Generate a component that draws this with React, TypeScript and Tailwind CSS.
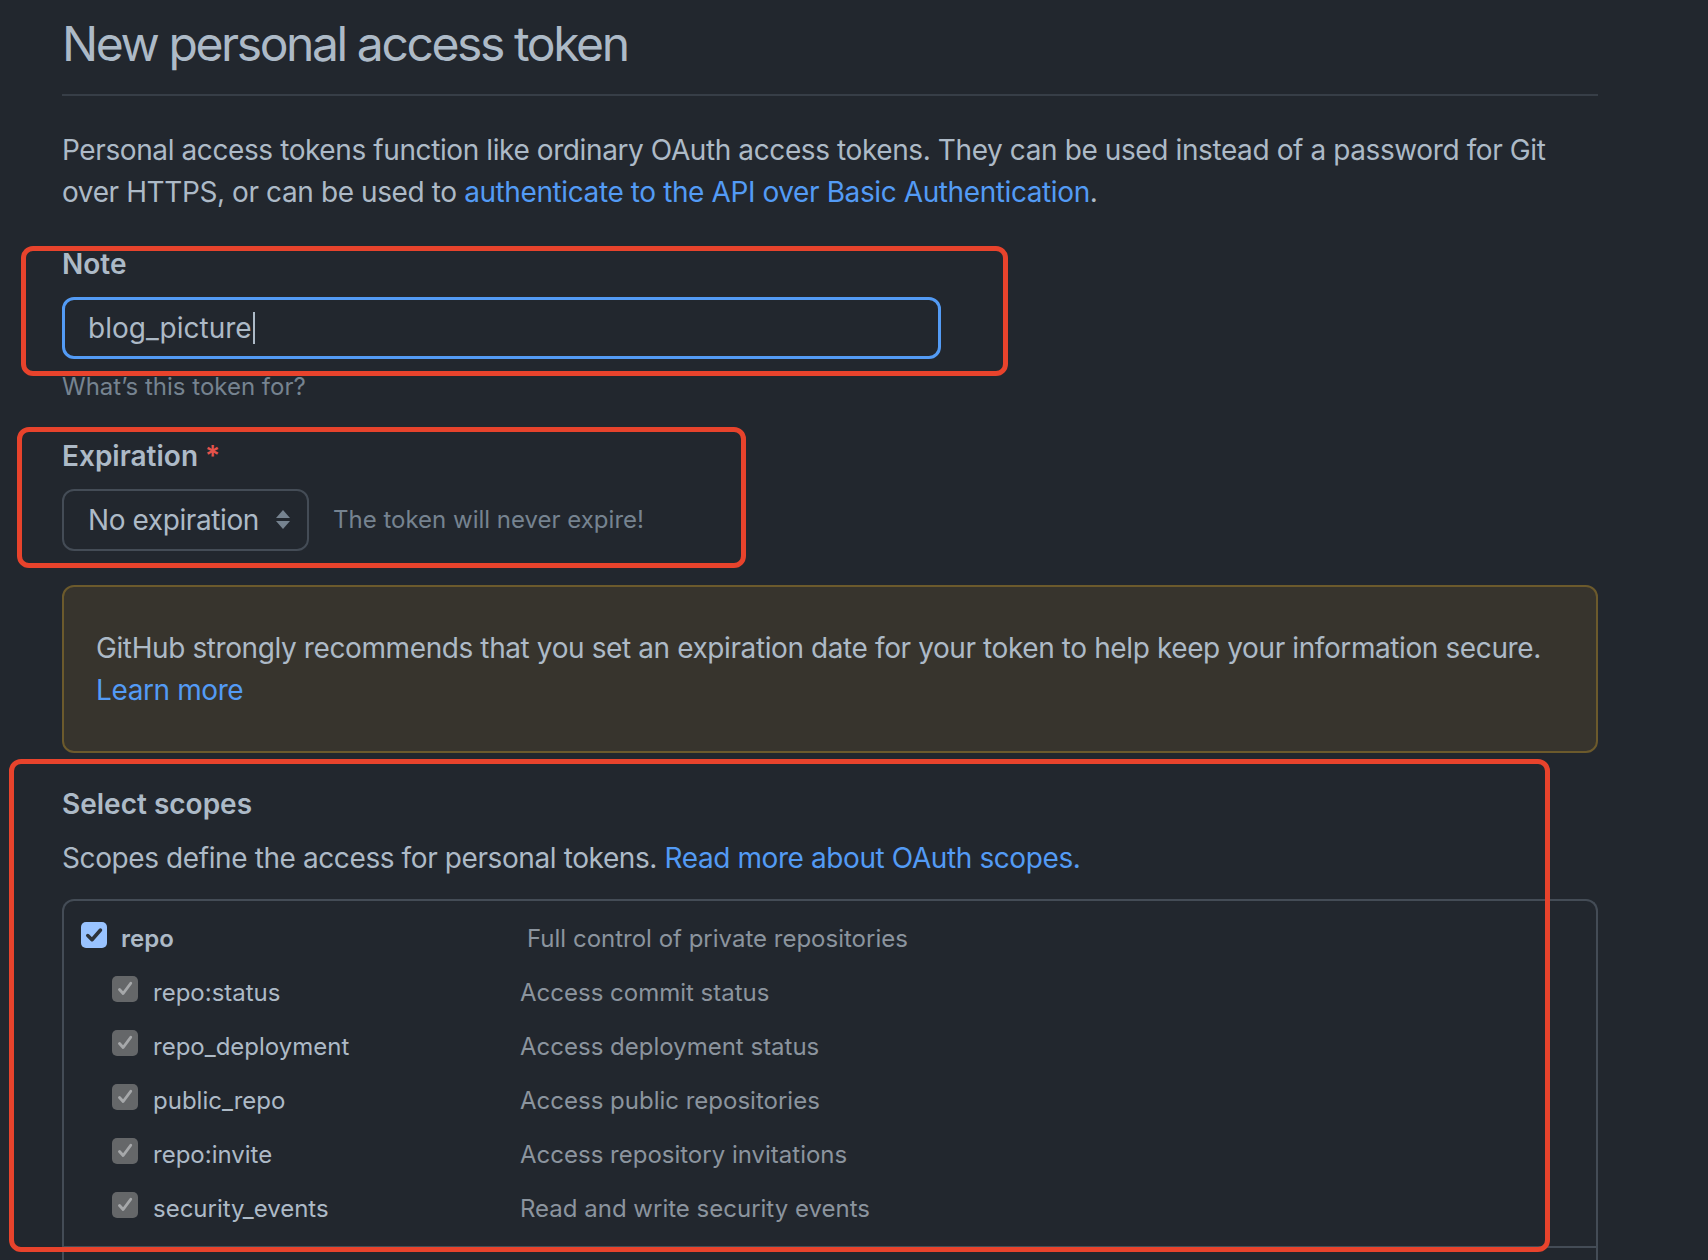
import React from "react";

const FONT = { fontFamily: 'Inter, "Liberation Sans", Arial, sans-serif' };

function BlueCheck() {
  return (
    <div className="flex h-[26px] w-[26px] shrink-0 items-center justify-center rounded-[5px] bg-[#99c3ff]">
      <svg width="20" height="20" viewBox="0 0 16 16">
        <path d="M3 8.4 L6.4 11.8 L13.2 4" fill="none" stroke="#2d333b" strokeWidth="2.8" strokeLinecap="round" strokeLinejoin="round" />
      </svg>
    </div>
  );
}

function GrayCheck() {
  return (
    <div className="flex h-[26px] w-[26px] shrink-0 items-center justify-center rounded-[5px] bg-[#656769]">
      <svg width="20" height="20" viewBox="0 0 16 16">
        <path d="M3.6 8.4 L6.5 11.6 L12.6 3.4" fill="none" stroke="#a6a8aa" strokeWidth="2.3" strokeLinecap="round" strokeLinejoin="round" />
      </svg>
    </div>
  );
}

const subs: [string, string][] = [
  ["repo:status", "Access commit status"],
  ["repo_deployment", "Access deployment status"],
  ["public_repo", "Access public repositories"],
  ["repo:invite", "Access repository invitations"],
  ["security_events", "Read and write security events"],
];

export default function App() {
  return (
    <div className="relative h-[1260px] overflow-hidden bg-[#22272e] text-[#adbac7]" style={FONT}>
      <div className="ml-[62px] w-[1536px] pt-[14px]">
        <div className="border-b-2 border-[#373e47] pb-[20px]">
          <h1 className="text-[48px] font-normal leading-[60px] tracking-[-2.4px] text-[#adbac7]">New personal access token</h1>
        </div>

        <p className="mt-[33px] text-[28px] leading-[42px] tracking-[-0.4px]">
          Personal access tokens function like ordinary OAuth access tokens. They can be used instead of a password for Git
          <br />
          over HTTPS, or can be used to{" "}
          <span className="text-[#539bf5]">authenticate to the API over Basic Authentication</span>.
        </p>

        <div className="mt-[30px]">
          <div className="text-[28px] font-semibold leading-[42px]">Note</div>
          <div className="mt-[12px] flex h-[62px] w-[879px] items-center rounded-[12px] border-[3px] border-[#539bf5] bg-[#22272e] pl-[23px]">
            <span className="text-[28px] leading-[34px]">blog_picture</span>
            <span className="ml-[1px] h-[32px] w-[2px] bg-[#adbac7]" />
          </div>
          <div className="mt-[10px] text-[24px] leading-[36px] text-[#768390]">What’s this token for?</div>
        </div>

        <div className="mt-[30px]">
          <div className="text-[28px] font-semibold leading-[42px]">
            Expiration <span className="text-[#e5534b]">*</span>
          </div>
          <div className="mt-[12px] flex items-center">
            <div className="flex h-[62px] w-[247px] items-center justify-between rounded-[12px] border-2 border-[#444c56] bg-[#22272e] pl-[24px] pr-[16px]">
              <span className="text-[28px] leading-[34px] tracking-[-0.4px]">No expiration</span>
              <svg width="16" height="22" viewBox="0 0 16 22">
                <path d="M8 1 L15 9 L1 9 Z" fill="#768390" />
                <path d="M1 12 L15 12 L8 20 Z" fill="#768390" />
              </svg>
            </div>
            <div className="ml-[24px] text-[24px] leading-[36px] text-[#768390]">The token will never expire!</div>
          </div>
        </div>

        <div className="mt-[34px] rounded-[12px] border-2 border-[#6c5a2c] bg-[#37342d] px-[32px] py-[40px] text-[28px] leading-[42px] tracking-[-0.4px]">
          GitHub strongly recommends that you set an expiration date for your token to help keep your information secure.
          <br />
          <span className="text-[#539bf5]">Learn more</span>
        </div>

        <div className="mt-[30px] text-[28px] font-semibold leading-[42px]">Select scopes</div>
        <p className="mt-[12px] text-[28px] leading-[42px] tracking-[-0.4px]">
          Scopes define the access for personal tokens. <span className="text-[#539bf5]">Read more about OAuth scopes.</span>
        </p>

        <div className="mt-[20px] rounded-t-[12px] border-2 border-b-0 border-[#444c56]">
          <div className="border-b-2 border-[#444c56] pb-[10px] pt-[11px]">
            <div className="flex h-[54px] items-center pl-[17px]">
              <div className="mb-[8px]">
                <BlueCheck />
              </div>
              <div className="ml-[14px] w-[406px] text-[24px] font-semibold leading-[34px]">repo</div>
              <div className="text-[24px] leading-[34px] text-[#8b949e]">Full control of private repositories</div>
            </div>
            {subs.map(([name, desc]) => (
              <div key={name} className="flex h-[54px] items-center pl-[48px]">
                <div className="mb-[8px]">
                  <GrayCheck />
                </div>
                <div className="ml-[15px] w-[367px] text-[24px] leading-[34px]">{name}</div>
                <div className="text-[24px] leading-[34px] text-[#8b949e]">{desc}</div>
              </div>
            ))}
          </div>
          <div className="h-[200px]" />
        </div>
      </div>

      <div className="pointer-events-none absolute left-[21px] top-[246px] h-[130px] w-[987px] rounded-[12px] border-[5px] border-[#e8432c]" />
      <div className="pointer-events-none absolute left-[17px] top-[427px] h-[141px] w-[729px] rounded-[12px] border-[5px] border-[#e8432c]" />
      <div className="pointer-events-none absolute left-[9px] top-[759px] h-[493px] w-[1541px] rounded-[12px] border-[5px] border-[#e8432c]" />
    </div>
  );
}
